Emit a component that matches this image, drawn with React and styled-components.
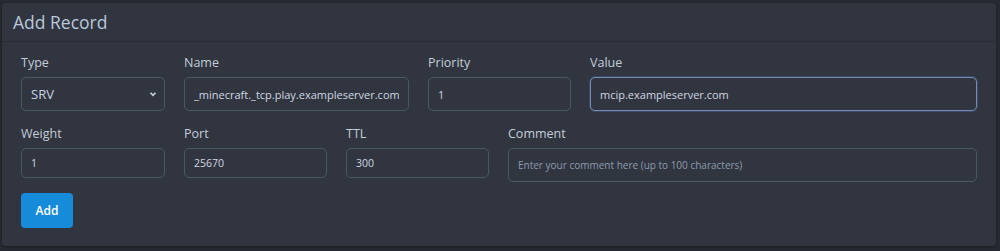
import React, { useState } from "react";
import styled, { createGlobalStyle } from "styled-components";

const GlobalStyle = createGlobalStyle`
  html, body {
    margin: 0;
    padding: 0;
    background: #262a32;
    font-family: "Open Sans", "Noto Sans", sans-serif;
  }
  * {
    box-sizing: border-box;
  }
`;

const App = () => {
  const [type, setType] = useState("SRV");
  const [name, setName] = useState("_minecraft._tcp.play.exampleserver.com");
  const [priority, setPriority] = useState("1");
  const [value, setValue] = useState("mcip.exampleserver.com");
  const [weight, setWeight] = useState("1");
  const [port, setPort] = useState("25670");
  const [ttl, setTtl] = useState("300");
  const [comment, setComment] = useState("");

  return (
    <Page>
      <GlobalStyle />
      <Card>
        <CardHeader>Add Record</CardHeader>
        <CardBody>
          <Row>
            <Field width={144}>
              <Label>Type</Label>
              <SelectWrap>
                <Select value={type} onChange={(e) => setType(e.target.value)}>
                  <option>A</option>
                  <option>AAAA</option>
                  <option>CNAME</option>
                  <option>MX</option>
                  <option>TXT</option>
                  <option>SRV</option>
                </Select>
                <Chevron viewBox="0 0 10 10">
                  <path d="M2.5 3.8 L5 6.3 L7.5 3.8" />
                </Chevron>
              </SelectWrap>
            </Field>
            <Field width={225}>
              <Label>Name</Label>
              <Input value={name} onChange={(e) => setName(e.target.value)} />
            </Field>
            <Field width={143}>
              <Label>Priority</Label>
              <Input value={priority} onChange={(e) => setPriority(e.target.value)} />
            </Field>
            <Field width={387}>
              <Label>Value</Label>
              <Input focused value={value} onChange={(e) => setValue(e.target.value)} />
            </Field>
          </Row>
          <Row>
            <Field width={144}>
              <Label>Weight</Label>
              <SmallInput value={weight} onChange={(e) => setWeight(e.target.value)} />
            </Field>
            <Field width={143}>
              <Label>Port</Label>
              <SmallInput value={port} onChange={(e) => setPort(e.target.value)} />
            </Field>
            <Field width={143}>
              <Label>TTL</Label>
              <SmallInput value={ttl} onChange={(e) => setTtl(e.target.value)} />
            </Field>
            <Field width={469}>
              <Label>Comment</Label>
              <SmallInput
                tall
                placeholder="Enter your comment here (up to 100 characters)"
                value={comment}
                onChange={(e) => setComment(e.target.value)}
              />
            </Field>
          </Row>
          <AddBtn>Add</AddBtn>
        </CardBody>
      </Card>
    </Page>
  );
};

const Page = styled.div`
  width: 1000px;
  height: 251px;
  padding: 3px 4px 5px 2px;
`;
const Card = styled.div`
  height: 100%;
  background: #30353f;
  border-radius: 4px;
  box-shadow: 0 1px 3px rgba(0, 0, 0, 0.35);
  display: flex;
  flex-direction: column;
`;
const CardHeader = styled.div`
  height: 39px;
  padding: 0 11px;
  display: flex;
  align-items: center;
  font-size: 17.5px;
  color: #b9c8dc;
  border-bottom: 1px solid #282c34;
`;
const CardBody = styled.div`
  padding: 13px 18px 0 19px;
  display: flex;
  flex-direction: column;
`;
const Row = styled.div`
  display: flex;
  gap: 19px;
  & + & {
    margin-top: 15px;
  }
`;
const Field = styled.div`
  width: ${({ width }) => width}px;
  display: flex;
  flex-direction: column;
  gap: 6px;
`;
const Label = styled.label`
  font-size: 12.5px;
  line-height: 16px;
  color: #c3cdda;
`;
const Input = styled.input`
  width: 100%;
  height: 34px;
  padding: 0 9px;
  background: #30353f;
  border: 1px solid ${({ focused }) => (focused ? "#6d8bbb" : "#4a5866")};
  box-shadow: ${({ focused }) => (focused ? "0 0 0 1px rgba(109,139,187,0.25)" : "none")};
  border-radius: 5px;
  color: #d0d7e2;
  font-family: inherit;
  font-size: 11px;
  outline: none;
`;
const SmallInput = styled(Input)`
  height: ${({ tall }) => (tall ? 34 : 30)}px;
  font-size: 10.5px;
  &::placeholder {
    color: #8e9bb0;
    font-size: 10px;
  }
`;
const SelectWrap = styled.div`
  position: relative;
`;
const Select = styled.select`
  width: 100%;
  height: 34px;
  padding: 0 9px;
  appearance: none;
  background: #30353f;
  border: 1px solid #4a5866;
  border-radius: 5px;
  color: #c8d3e2;
  font-family: inherit;
  font-size: 13px;
  outline: none;
`;
const Chevron = styled.svg`
  position: absolute;
  right: 7px;
  top: 12px;
  width: 10px;
  height: 10px;
  fill: none;
  stroke: #c8d3e2;
  stroke-width: 1.6;
  pointer-events: none;
`;
const AddBtn = styled.button`
  align-self: flex-start;
  width: 52px;
  height: 35px;
  margin-top: 11px;
  background: #168bda;
  border: none;
  border-radius: 4px;
  color: #ffffff;
  font-family: inherit;
  font-size: 12px;
  font-weight: 600;
`;

export default App;
